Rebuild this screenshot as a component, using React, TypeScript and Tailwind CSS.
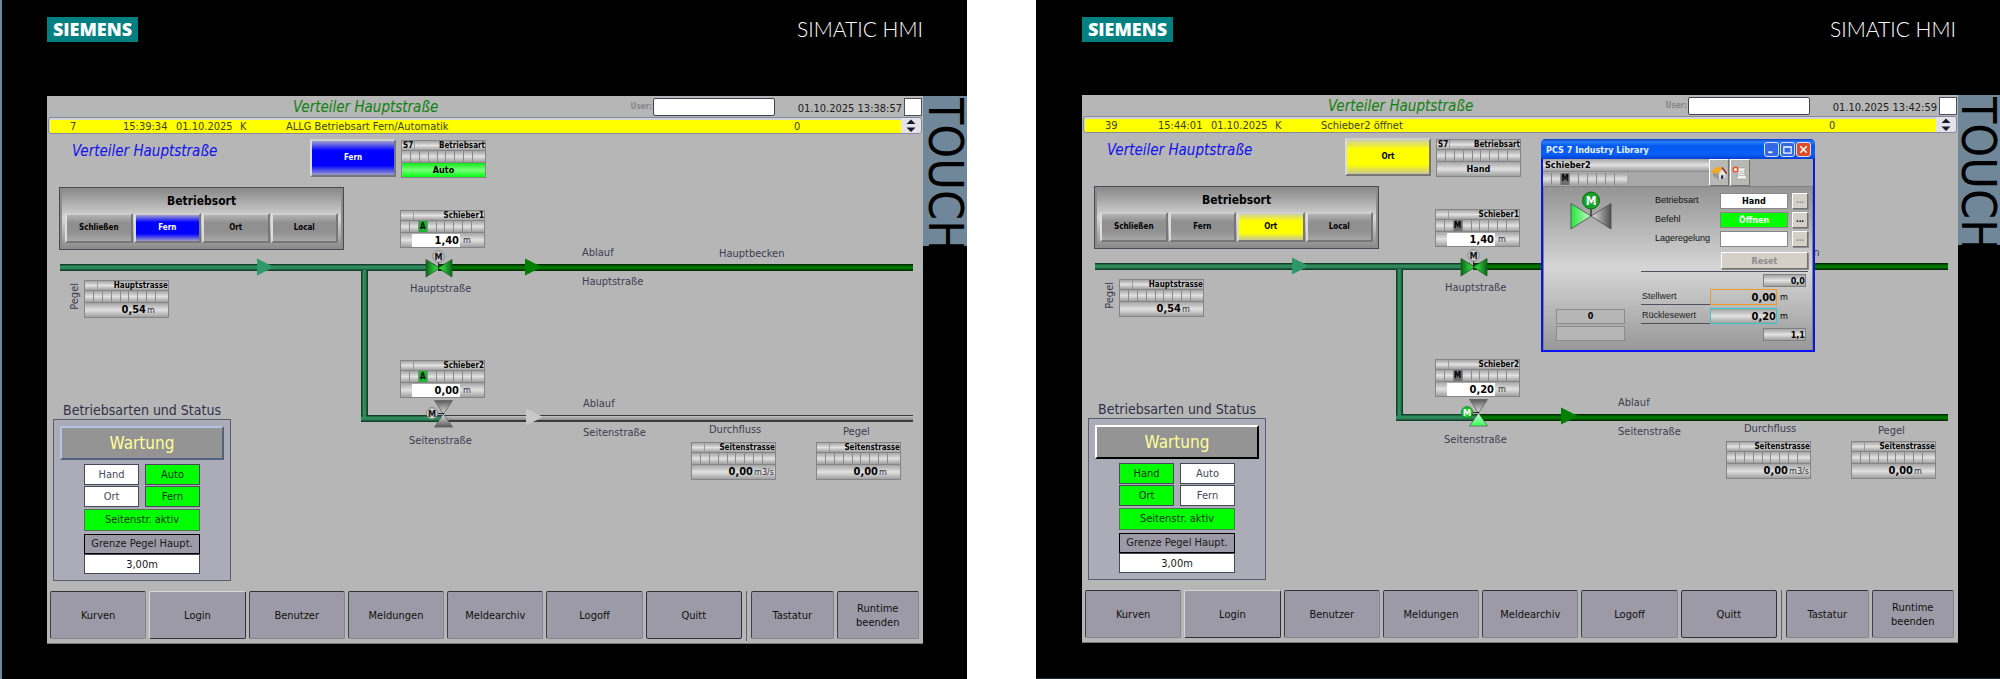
import React from "react";

type Mode = "A" | "M";

interface Station {
  id: string;
  alarm: { no: string; time: string; date: string; state: string; text: string };
  clock: string;
  place: "Fern" | "Ort";
  auto: boolean;
  mode: Mode;
  side: string;
  sideOpen: boolean;
}

const METAL = "bg-linear-to-b from-[#a4a4a4] via-[#e2e2e2] to-[#a0a0a0]";
const LABEL = "absolute text-[11px] leading-[16px] text-[#3c3c50] whitespace-nowrap";

function Cells({ mode, className = "" }: { mode?: Mode; className?: string }) {
  return (
    <div className={`grid grid-cols-[repeat(8,1fr)_12px] text-center text-[8px] font-bold leading-[11px] ${METAL} ${className}`}>
      {Array.from({ length: 9 }, (_, i) => {
        const tone =
          i === 2 && mode === "A"
            ? "bg-[#16b82c] text-black"
            : i === 2 && mode === "M"
              ? "bg-[#6e6e6e] text-black"
              : "";
        return (
          <span key={i} className={`min-w-0 border-r border-[#8a8a8a] last:border-r-0 ${tone}`}>
            {i === 2 ? mode : ""}
          </span>
        );
      })}
    </div>
  );
}

function Faceplate({
  title,
  tag = "",
  mode,
  className,
  children,
}: {
  title: string;
  tag?: string;
  mode?: Mode;
  className: string;
  children: React.ReactNode;
}) {
  return (
    <section className={`absolute flex h-[38px] w-[85px] flex-col gap-px border border-[#858585] bg-[#858585] text-black ${className}`}>
      <div className={`flex h-[9px] text-[8px] font-bold leading-[9px] ${METAL}`}>
        <span className="w-[13px] border-r border-[#9a9a9a] pl-px">{tag}</span>
        <span className="flex-1 text-right">{title}</span>
      </div>
      <Cells mode={mode} className="h-[11px]" />
      {children}
    </section>
  );
}

function Reading({ value, unit }: { value: string; unit: string }) {
  return (
    <div className={`flex h-[14px] items-center gap-px leading-[14px] ${METAL}`}>
      <span className="w-[61px] text-right text-[11px] font-bold">{value}</span>
      <span className="text-[9px] text-[#303038]">{unit}</span>
    </div>
  );
}

function SetReading({ value, unit }: { value: string; unit: string }) {
  return (
    <div className={`flex h-[14px] items-center leading-[14px] ${METAL}`}>
      <span className="ml-[11px] h-[13px] w-[48px] bg-white pr-px text-right text-[11px] font-bold leading-[13px]">{value}</span>
      <span className="pl-[3px] text-[9px] text-[#303038]">{unit}</span>
    </div>
  );
}

function Arrow({ className }: { className: string }) {
  return (
    <svg className={`absolute h-[18px] w-[17px] ${className}`} viewBox="0 0 17 18" fill="currentColor" aria-hidden="true">
      <path d="M0 0.5 17 9 0 17.5z" />
    </svg>
  );
}

function MainValve({ id }: { id: string }) {
  return (
    <svg className="absolute left-[378px] top-[116px] h-[28px] w-[28px]" viewBox="0 0 28 28" aria-hidden="true">
      <defs>
        <linearGradient id={`${id}-mv`} x1="0" x2="1">
          <stop offset="0" stopColor="#0c6418" />
          <stop offset="0.35" stopColor="#2ec83c" />
          <stop offset="0.65" stopColor="#2ec83c" />
          <stop offset="1" stopColor="#0c6418" />
        </linearGradient>
      </defs>
      <path d="M1 9.5 14 17.500 27 9.5V27L14 18.500 1 27z" fill={`url(#${id}-mv)`} stroke="#1c5c22" strokeWidth="0.8" />
      <path d="M13.500 11v7" stroke="#222" />
      <circle cx="13.500" cy="6.500" r="5.700" fill="#c9c9c9" stroke="#777" strokeWidth="0.8" />
      <text x="13.500" y="9.800" textAnchor="middle" fontSize="9" fontWeight="700" fill="#111">M</text>
    </svg>
  );
}

function SideValve({ id, open }: { id: string; open: boolean }) {
  return (
    <svg className="absolute left-[378px] top-[265px] h-[30px] w-[30px]" viewBox="0 0 30 30" aria-hidden="true">
      <defs>
        <linearGradient id={`${id}-st`} x1="0" y1="0" x2="0" y2="1">
          <stop offset="0" stopColor="#5a5a5a" />
          <stop offset="1" stopColor="#e4e4e4" />
        </linearGradient>
        <linearGradient id={`${id}-sb`} x1="0" y1="1" x2="0" y2="0">
          <stop offset="0" stopColor={open ? "#34ff54" : "#5a5a5a"} />
          <stop offset="1" stopColor={open ? "#c8ffd0" : "#e4e4e4"} />
        </linearGradient>
      </defs>
      <path d="M9.500 1.500h18L18.500 15z" fill={`url(#${id}-st)`} stroke="#5e5e5e" strokeWidth="0.8" />
      <path d="M9.500 28h18L18.500 15z" fill={`url(#${id}-sb)`} stroke="#5e5e5e" strokeWidth="0.8" />
      <path d="M13 14.500h6" stroke="#222" />
      <circle cx="7" cy="14.300" r="5.700" fill={open ? "#1cc42c" : "#c9c9c9"} stroke={open ? "#128a1c" : "#777"} strokeWidth="0.8" />
      <text x="7" y="17.600" textAnchor="middle" fontSize="9" fontWeight="700" fill={open ? "#fff" : "#111"}>M</text>
    </svg>
  );
}

function placeTone(name: string, active: boolean) {
  if (!active) return "bg-[linear-gradient(#b4b4b4,#909090_30%,#909090_65%,#a8a8a8)] text-black";
  return name === "Fern"
    ? "bg-[linear-gradient(#a0a0d0,#0000ff_28%,#0000ff_72%,#9c9ccc)] text-white"
    : "bg-[linear-gradient(#d0d0a0,#ffff00_28%,#ffff00_72%,#c8c898)] text-black";
}

const BEVEL = "border-2 border-t-[#cfcfcf] border-l-[#dcdcdc] border-r-[#777777] border-b-[#777777]";

function OperatingPlace({ place }: { place: string }) {
  return (
    <section className="absolute left-[12px] top-[53px] flex h-[63px] w-[285px] flex-col border border-[#484858] bg-[#8c8c8c] p-[2px]">
      <div className="flex flex-1 flex-col bg-[linear-gradient(#8c8c8c,#d6d6d6_50%,#8e8e8e)] px-[3px] pb-[4px]">
        <h3 className="pt-[4px] text-center text-[12px] font-bold leading-[14px] text-black">Betriebsort</h3>
        <div className="mt-auto grid h-[30px] grid-cols-4 gap-px">
          {["Schließen", "Fern", "Ort", "Local"].map((name) => (
            <button key={name} type="button" className={`text-[8px] font-bold ${BEVEL} ${placeTone(name, name === place)}`}>
              {name}
            </button>
          ))}
        </div>
      </div>
    </section>
  );
}

function StatusPanel({ auto, place }: { auto: boolean; place: string }) {
  const items = [
    { name: "Hand", on: !auto },
    { name: "Auto", on: auto },
    { name: "Ort", on: place === "Ort" },
    { name: "Fern", on: place === "Fern" },
  ];
  const frame = auto
    ? "border-t-[#b4c4e0] border-l-[#b4c4e0] border-r-[#506480] border-b-[#506480]"
    : "border-t-white border-l-white border-r-black border-b-black";
  return (
    <section className="absolute left-[6px] top-[267px] w-[178px]">
      <h3 className="text-center text-[14px] leading-[18px] text-[#303048]">Betriebsarten und Status</h3>
      <div className="flex h-[162px] flex-col items-center border border-[#5c5c70] bg-[#acacb8] px-[6px] pt-[6px]">
        <button type="button" className={`h-[34px] w-full border-2 bg-[#949494] text-[17px] leading-[28px] text-[#ffff99] ${frame}`}>
          Wartung
        </button>
        <div className="mt-[4px] flex w-[116px] flex-col text-center text-[11px]">
          <div className="grid grid-cols-2 gap-x-[6px] gap-y-px">
            {items.map(({ name, on }) => (
              <div key={name} className={`h-[21px] border border-[#484858] leading-[19px] ${on ? "bg-[#00ff00] text-[#103010]" : "bg-white text-[#484860]"}`}>
                {name}
              </div>
            ))}
          </div>
          <div className="mt-[2px] h-[22px] border border-[#48784c] bg-[#00ff00] leading-[20px] text-[#103010]">Seitenstr. aktiv</div>
          <div className="mt-[3px] h-[20px] border border-black bg-[#9c9aa6] leading-[18px] text-[#181818]">Grenze Pegel Haupt.</div>
          <input
            aria-label="Grenze Pegel Haupt."
            defaultValue="3,00m"
            className="h-[20px] w-full border border-[#484858] bg-white text-center text-[11px] text-[#181818]"
          />
        </div>
      </div>
    </section>
  );
}

const GREY_BTN = "border border-t-white border-l-white border-r-[#707070] border-b-[#707070] shadow-[1px_1px_0_#8c8c8c] bg-[#d4d0c8]";

function DialogRow({ label, value, tone, enabled }: { label: string; value: string; tone: string; enabled: boolean }) {
  const id = `field-${label}`;
  return (
    <div className="flex h-[16px] gap-[4px]">
      <label htmlFor={id} className="flex-1 pl-[14px] font-['Liberation_Sans'] text-[9px] leading-[14px] text-[#101010]">
        {label}
      </label>
      <input id={id} readOnly value={value} className={`h-[16px] w-[68px] border border-[#888888] text-center text-[9px] font-bold ${tone}`} />
      <button type="button" aria-label={`${label} ändern`} className={`w-[16px] text-[8px] font-bold leading-[14px] ${GREY_BTN} ${enabled ? "text-black" : "text-[#8c8c8c]"}`}>
        ...
      </button>
    </div>
  );
}

function Limit({ value }: { value: string }) {
  return <div className={`ml-auto mr-[2px] h-[13px] w-[43px] border border-[#808080] text-right text-[9px] font-bold leading-[12px] ${METAL}`}>{value}</div>;
}

function AnalogRow({ label, value, tone }: { label: string; value: string; tone: string }) {
  return (
    <div className="flex h-[16px] items-center">
      <span className="w-[69px] border-b border-[#505060] pl-px font-['Liberation_Sans'] text-[9px] leading-[15px] text-[#202020]">{label}</span>
      <span className={`h-[16px] w-[67px] border text-right text-[11px] font-bold leading-[15px] ${tone}`}>{value}</span>
      <span className="pl-[3px] text-[9px] leading-[13px]">m</span>
    </div>
  );
}

function ValveDialog() {
  const caption = "flex size-[15px] items-center justify-center rounded-[3px] border border-[#d8e0ff]";
  const tool = "flex w-[20px] items-center justify-center border border-t-white border-l-white border-r-[#707070] border-b-[#707070] bg-[#b8b8b4]";
  return (
    <section className="absolute left-[459px] top-[6px] flex h-[213px] w-[274px] flex-col rounded-t-[5px] border-x-2 border-b-2 border-[#0a14f0] bg-[#a8a8a8] text-black">
      <header className="-mx-[2px] flex h-[20px] items-center gap-px rounded-t-[5px] bg-[linear-gradient(#0a3cc8,#2a80ff_15%,#0058ee_35%,#0a60f8_75%,#0440d0)] px-[4px] pt-px">
        <h2 className="flex-1 pl-px text-[9px] font-bold leading-[16px] text-[#e8f0ff]">PCS 7 Industry Library</h2>
        <button type="button" aria-label="Minimieren" className={`${caption} bg-[#3468e4]`}>
          <svg viewBox="0 0 12 12" className="size-[11px]"><path d="M2.500 9h4.500" stroke="#fff" strokeWidth="2" /></svg>
        </button>
        <button type="button" aria-label="Maximieren" className={`${caption} bg-[#3468e4]`}>
          <svg viewBox="0 0 12 12" className="size-[11px]"><path d="M2 3h8v7H2zM2 3.500h8" fill="none" stroke="#fff" strokeWidth="1.300" /></svg>
        </button>
        <button type="button" aria-label="Schließen" className={`${caption} bg-[#e04c28]`}>
          <svg viewBox="0 0 12 12" className="size-[11px]"><path d="m2.500 2.500 7 7m0-7-7 7" stroke="#fff" strokeWidth="1.700" /></svg>
        </button>
      </header>
      <div className="flex h-[27px] shrink-0">
        <div className="w-[166px]">
          <div className={`h-[13px] border-b border-[#8c8c8c] pl-[2px] text-[9px] font-bold leading-[12px] ${METAL}`}>Schieber2</div>
          <Cells mode="M" className="mt-px h-[12px] w-[84px]" />
        </div>
        <button type="button" aria-label="Startansicht" className={tool}>
          <svg viewBox="0 0 16 14" className="h-[14px] w-[16px] shrink-0">
            <path d="M2 6v4l6 3.500V8z" fill="#9a9a94" />
            <path d="m8 8 3.500-5L14.500 7v4.500L8 13.500z" fill="#e4e4dc" />
            <path d="M0 6 5 1l6 .5L7 8z" fill="#f4a81c" />
            <path d="m11 1.500 4.500 6" stroke="#a02828" strokeWidth="1.600" />
            <path d="M10 9.500 12.300 9v3.500L10 13z" fill="#1c2c60" />
          </svg>
        </button>
        <button type="button" aria-label="Meldungen anzeigen" className={`ml-px ${tool}`}>
          <svg viewBox="0 0 16 14" className="h-[14px] w-[16px] shrink-0">
            <path d="M5 2h9.500l-2 2 .5 6h2l-1 3H4l2-3V4z" fill="#f2f2ee" stroke="#8a8a8a" strokeWidth="0.500" />
            <path d="M7 5.500h4.500M7 7.500h5M7 9.500h5" stroke="#999" strokeWidth="0.600" />
            <circle cx="3.500" cy="3.500" r="2.300" fill="#fff" stroke="#f05028" strokeWidth="1.500" />
          </svg>
        </button>
      </div>
      <div className="flex flex-1 border-x border-t border-[#808080] bg-[linear-gradient(#949494,#d6d6d6_50%,#989898)]">
        <div className="flex w-[97px] flex-col pb-[9px] pl-[12px]">
          <svg viewBox="0 0 42 40" className="ml-[14px] mt-[4px] h-[40px] w-[42px]" aria-hidden="true">
            <defs>
              <linearGradient id="dlg-l" x1="0" x2="1">
                <stop offset="0" stopColor="#22e83c" />
                <stop offset="1" stopColor="#c8f8cc" />
              </linearGradient>
              <linearGradient id="dlg-r" x1="0" x2="1">
                <stop offset="0" stopColor="#e0e0e0" />
                <stop offset="1" stopColor="#505050" />
              </linearGradient>
            </defs>
            <path d="M1 12.500 21 25 1 38z" fill="url(#dlg-l)" stroke="#4a4a4a" strokeWidth="0.800" />
            <path d="M41 12.500 21 25l20 13z" fill="url(#dlg-r)" stroke="#4a4a4a" strokeWidth="0.800" />
            <path d="M21 17v8" stroke="#333" strokeWidth="1.500" />
            <circle cx="21" cy="9.500" r="8.500" fill="#14a428" stroke="#0a6c18" />
            <text x="21" y="13.800" textAnchor="middle" fontSize="12" fontWeight="700" fill="#fff">M</text>
          </svg>
          <div className="mt-auto h-[15px] w-[69px] border border-[#8c8c8c] bg-[#b6b6b6] text-center text-[9px] font-bold leading-[13px]">0</div>
          <div className="mt-[2px] h-[15px] w-[69px] border border-[#8c8c8c] bg-[#b6b6b6]" />
        </div>
        <div className="flex flex-1 flex-col pr-[4px] pt-[6px]">
          <div className="flex flex-col gap-[3px]">
            <DialogRow label="Betriebsart" value="Hand" tone="bg-white text-black" enabled={false} />
            <DialogRow label="Befehl" value="Öffnen" tone="bg-[#00ff00] text-white" enabled />
            <DialogRow label="Lageregelung" value="" tone="bg-white text-black" enabled={false} />
          </div>
          <button type="button" className={`ml-auto mt-[5px] h-[17px] w-[87px] text-[9px] font-bold leading-[14px] text-[#8c8c8c] ${GREY_BTN}`}>
            Reset
          </button>
          <div className="mt-[2px] flex flex-col border-t border-[#505060] pt-[2px]">
            <Limit value="0,0" />
            <div className="mt-[2px] flex flex-col gap-[3px]">
              <AnalogRow label="Stellwert" value="0,00" tone="border-[#f09820]" />
              <AnalogRow label="Rücklesewert" value="0,20" tone={`border-[#30c8c8] ${METAL}`} />
            </div>
            <div className="mt-[4px] flex">
              <Limit value="1,1" />
            </div>
          </div>
        </div>
      </div>
    </section>
  );
}

const TEAL_H = "bg-[linear-gradient(#0c2c1c,#2e8b5c_35%,#2e8b5c_60%,#0c2c1c)]";
const TEAL_V = "bg-[linear-gradient(90deg,#0c2c1c,#2e8b5c_35%,#2e8b5c_60%,#0c2c1c)]";
const GREEN_H = "bg-[linear-gradient(#001c00,#007800_40%,#007800_60%,#001c00)]";
const GREY_H = "border-t border-b-2 border-[#3c3c3c] bg-linear-to-b from-[#c0c0c0] to-[#8c8c8c]";

function Process({ s }: { s: Station }) {
  return (
    <main className="relative min-h-[456px] flex-1 overflow-hidden">
      <h2 className="absolute left-[25px] top-[7px] text-[15px] italic leading-[20px] text-[#1010f0]">Verteiler Hauptstraße</h2>
      <button type="button" className={`absolute left-[263px] top-[5px] h-[38px] w-[86px] text-[8px] font-bold ${BEVEL} ${placeTone(s.place, true)}`}>
        {s.place}
      </button>
      <Faceplate title="Betriebsart" tag="S7" className="left-[354px] top-[6px]">
        <div
          className={`h-[14px] text-center text-[9px] font-bold leading-[14px] ${s.auto ? "bg-[linear-gradient(#10e818,#78ff78_50%,#00ff10)]" : METAL}`}
        >
          {s.auto ? "Auto" : "Hand"}
        </div>
      </Faceplate>
      <OperatingPlace place={s.place} />

      <div className={`absolute left-[13px] top-[130px] h-[7px] w-[375px] ${TEAL_H}`} />
      <div className={`absolute left-[391px] right-[10px] top-[130px] h-[7px] ${GREEN_H}`} />
      <div className={`absolute left-[314px] top-[136px] h-[152px] w-[7px] ${TEAL_V}`} />
      <div className={`absolute left-[314px] top-[281px] h-[7px] w-[80px] ${TEAL_H}`} />
      <div className="absolute left-[316px] top-[279px] h-[6px] w-[3px] bg-[#2e8b5c]" />
      <div className={`absolute left-[394px] right-[10px] top-[281px] h-[7px] ${s.sideOpen ? GREEN_H : GREY_H}`} />
      <Arrow className="left-[210px] top-[124px] text-[#2f9868]" />
      <Arrow className="left-[478px] top-[124px] text-[#008000]" />
      <Arrow className={`left-[479px] top-[274px] ${s.sideOpen ? "text-[#008000]" : "text-[#c8c8c8]"}`} />

      <Faceplate title="Schieber1" mode={s.mode} className="left-[353px] top-[76px]">
        <SetReading value="1,40" unit="m" />
      </Faceplate>
      <MainValve id={s.id} />
      <p className={`${LABEL} left-[363px] top-[147px]`}>Hauptstraße</p>
      <p className={`${LABEL} left-[535px] top-[111px]`}>Ablauf</p>
      <p className={`${LABEL} left-[535px] top-[140px]`}>Hauptstraße</p>
      <p className={`${LABEL} left-[672px] top-[112px]`}>Hauptbecken</p>

      <p className={`${LABEL} left-[20px] top-[149px] rotate-180 [writing-mode:vertical-rl]`}>Pegel</p>
      <Faceplate title="Hauptstrasse" className="left-[37px] top-[146px]">
        <Reading value="0,54" unit="m" />
      </Faceplate>

      <Faceplate title="Schieber2" mode={s.mode} className="left-[353px] top-[226px]">
        <SetReading value={s.side} unit="m" />
      </Faceplate>
      <SideValve id={s.id} open={s.sideOpen} />
      <p className={`${LABEL} left-[362px] top-[299px]`}>Seitenstraße</p>
      <p className={`${LABEL} left-[536px] top-[262px]`}>Ablauf</p>
      <p className={`${LABEL} left-[536px] top-[291px]`}>Seitenstraße</p>
      <p className={`${LABEL} left-[662px] top-[288px]`}>Durchfluss</p>
      <p className={`${LABEL} left-[796px] top-[290px]`}>Pegel</p>
      <Faceplate title="Seitenstrasse" className="left-[644px] top-[308px]">
        <Reading value="0,00" unit="m3/s" />
      </Faceplate>
      <Faceplate title="Seitenstrasse" className="left-[769px] top-[308px]">
        <Reading value="0,00" unit="m" />
      </Faceplate>

      <StatusPanel auto={s.auto} place={s.place} />
      {s.sideOpen && <ValveDialog />}
    </main>
  );
}

function NavButton({ name, wide = true }: { name: string; wide?: boolean }) {
  const frame =
    name === "Login"
      ? "border-t-[#d8d8d8] border-l-[#d8d8d8] border-r-[#303038] border-b-[#303038]"
      : name === "Quitt"
        ? "border-[#303038]"
        : "border-t-[#303038] border-l-[#404048] border-r-[#84848c] border-b-[#84848c]";
  return (
    <button type="button" className={`h-[48px] whitespace-pre-line rounded-[2px] border bg-[#9c9aa6] pt-px text-[11px] leading-[14px] text-[#101010] ${wide ? "flex-[96_1_0%]" : "flex-[82_1_0%]"} ${frame}`}>
      {name}
    </button>
  );
}

function Screen({ s }: { s: Station }) {
  return (
    <div className="flex min-w-0 flex-1 flex-col border-b border-[#787878] bg-[#b6b6b6]">
      <div className="flex h-[21px] items-center">
        <h1 className="flex-1 pl-[246px] text-[15px] italic leading-[20px] text-[#108010]">Verteiler Hauptstraße</h1>
        <label htmlFor={`${s.id}-user`} className="text-[8px] font-bold text-[#888888]">User:</label>
        <input id={`${s.id}-user`} className="ml-px h-[18px] w-[122px] rounded-[2px] border border-[#404058] bg-white" />
        <time className="w-[129px] pr-[2px] pt-[4px] text-right text-[11px] leading-[14px] text-[#202020]">{s.clock}</time>
        <span className="mr-px h-[18px] w-[18px] border border-[#505060] bg-white" />
      </div>
      <div className="ml-px mr-px flex h-[17px] rounded-[3px] border border-[#8888a0] bg-[#d0d0d8] pl-px pt-[2px]">
        <table className="h-[13px] flex-1 table-fixed border-collapse self-start bg-[#ffff00] text-[11px] leading-[13px] text-[#404018]">
          <tbody>
            <tr>
              <td className="w-[73px] p-0 pl-[20px]">{s.alarm.no}</td>
              <td className="w-[53px] p-0">{s.alarm.time}</td>
              <td className="w-[64px] p-0">{s.alarm.date}</td>
              <td className="w-[46px] p-0">{s.alarm.state}</td>
              <td className="p-0">{s.alarm.text}</td>
              <td className="w-[107px] p-0">0</td>
            </tr>
          </tbody>
        </table>
        <button type="button" aria-label="Meldung wechseln" className="-mt-[2px] flex w-[20px] items-center justify-center rounded-r-[3px] bg-[#e4e4e8]">
          <svg viewBox="0 0 10 13" className="h-[13px] w-[10px]" fill="#181830"><path d="M0.500 5 5 0.500 9.500 5zM0.500 8.500h9L5 13z" /></svg>
        </button>
      </div>
      <Process s={s} />
      <nav className="flex items-start gap-[3px] pb-[2px] pl-[3px] pr-[4px]">
        {["Kurven", "Login", "Benutzer", "Meldungen", "Meldearchiv", "Logoff", "Quitt"].map((n) => (
          <NavButton key={n} name={n} />
        ))}
        <span className="mx-[1px] h-[50px] w-px bg-[#606070]" />
        <NavButton name="Tastatur" wide={false} />
        <NavButton name={"Runtime\nbeenden"} wide={false} />
      </nav>
    </div>
  );
}

function Panel({
  s,
  className,
  headClass,
  padClass,
  sideClass,
}: {
  s: Station;
  className: string;
  headClass: string;
  padClass: string;
  sideClass: string;
}) {
  return (
    <article className={`flex flex-col bg-black ${padClass} ${className}`}>
      <header className={`flex items-start justify-between pr-[44px] ${headClass}`}>
        <div className="mt-[17px] flex h-[25px] w-[91px] items-center justify-center bg-[#008080] font-['Open_Sans'] text-[18px] font-extrabold leading-[25px] text-white">
          SIEMENS
        </div>
        <div className="mt-[16px] font-['Lato'] text-[21px] font-light leading-[25px] text-white">SIMATIC HMI</div>
      </header>
      <div className="flex flex-1">
        <Screen s={s} />
        <div className={`flex flex-col ${sideClass}`}>
          <div className="h-[150px] bg-[#70879a] pt-[2px] font-['Liberation_Sans_Narrow','DejaVu_Sans_Condensed',sans-serif] text-[48px] leading-[42px] text-black [writing-mode:vertical-rl]">
            TOUCH
          </div>
        </div>
      </div>
    </article>
  );
}

const STATIONS: Station[] = [
  {
    id: "p1",
    alarm: { no: "7", time: "15:39:34", date: "01.10.2025", state: "K", text: "ALLG Betriebsart Fern/Automatik" },
    clock: "01.10.2025 13:38:57",
    place: "Fern",
    auto: true,
    mode: "A",
    side: "0,00",
    sideOpen: false,
  },
  {
    id: "p2",
    alarm: { no: "39", time: "15:44:01", date: "01.10.2025", state: "K", text: "Schieber2 öffnet" },
    clock: "01.10.2025 13:42:59",
    place: "Ort",
    auto: false,
    mode: "M",
    side: "0,20",
    sideOpen: true,
  },
];

export default function App() {
  return (
    <div className="flex min-h-screen bg-white font-['DejaVu_Sans_Condensed','DejaVu_Sans',sans-serif]">
      <div className="flex flex-[967_1_0%] flex-col">
        <Panel
          s={STATIONS[0]}
          className="flex-1 border-l-2 border-[#70879a] pb-[35px]"
          headClass="h-[96px]"
          padClass="pl-[45px]"
          sideClass="w-[44px]"
        />
      </div>
      <div className="w-[69px]" />
      <div className="flex flex-[964_1_0%] flex-col">
        <Panel
          s={STATIONS[1]}
          className="flex-1 border-b border-[#202830] pb-[35px]"
          headClass="h-[95px]"
          padClass="pl-[46px]"
          sideClass="w-[42px]"
        />
      </div>
    </div>
  );
}
